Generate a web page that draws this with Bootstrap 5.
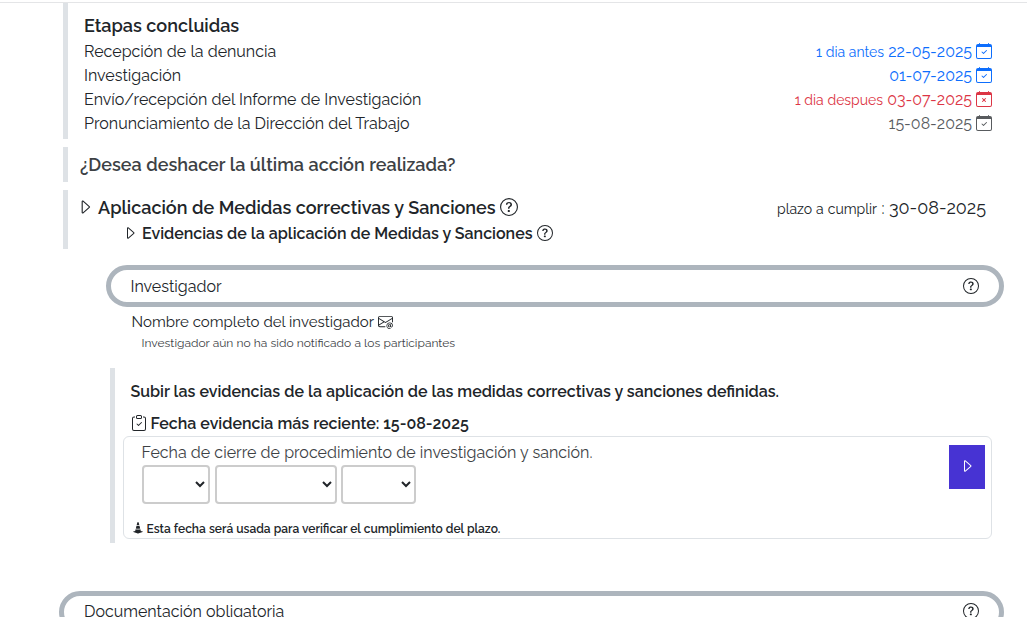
<!DOCTYPE html>
<html lang="es">
<head>
<meta charset="utf-8">
<meta name="viewport" content="width=device-width, initial-scale=1">
<title>Etapas del procedimiento</title>
<link rel="stylesheet" href="https://cdn.jsdelivr.net/npm/bootstrap@5.3.0/dist/css/bootstrap.min.css">
<style>
body{font-family:Raleway,Lato,sans-serif;font-size:16px;line-height:24px;word-spacing:.12px;overflow:hidden;height:617px}
.topline{border-top:1px solid #e4e5e7;margin-top:2px}
.bar{border-left:5px solid #dee2e6}
.stages{margin-left:63px;height:136px;padding:10px 35px 0 16px}
.stages-title{line-height:26px;margin-bottom:1px}
.undo{margin:8px 0 0 63px;height:35px;padding-left:12px}
.soft{opacity:.87}
.current{margin:8px 0 0 63px;height:59px;padding:5px 41px 0 8px}
.current-head{height:26px;margin-bottom:1px}
.sub-step{padding-left:46px}
.deadline{word-spacing:.4px}
.t18{font-size:18px}
.t15{font-size:15px}
.t14{font-size:14px}
.t12{font-size:12px}
.ic{width:1em;height:1em;fill:currentColor;flex:none;display:block}
.ic-up{margin-top:-2px}
.g4{gap:4px}
.pill{border:5px solid #adb5bd;border-radius:21px;height:42px;padding:0 20.5px 0 19.5px;margin:16px 23px 0 106px}
.pill span{padding-top:1px}
.pill-wide{margin:48px 23px 0 59px;padding-left:20px}
.pill.pill-wide span{padding-top:0}
.investigator{margin-left:131.5px;height:46px;padding-top:3px}
.note{padding-left:10px;line-height:18px}
.upload{margin:15px 35px 0 110px;height:175px;padding:12px 0 0 8px}
.upload-line{padding-left:7.5px}
.datebox{border:1px solid #dee2e6;border-radius:6px;height:103px;padding:4px 6px 0 17.5px}
.datebox select{border:2px solid #ccc;border-radius:4px;height:39px;background:#fff;color:#212529;font-family:Raleway,sans-serif;padding:5px 5px 4px 4px}
.selects{gap:5px;padding-left:.5px}
.s-day{width:68px}.s-month{width:122px}.s-year{width:75px;margin-left:-1px}
.send{background:#4733d3;color:#fff;width:36px;height:44px;border:0;border-radius:0;margin-top:4px}
.hint{margin:13px 0 0 -10px;gap:3px}
</style>
</head>
<body>
<svg class="d-none">
  <symbol id="cal" viewBox="0 0 16 16"><path d="M10.854 7.146a.5.5 0 0 1 0 .708l-3 3a.5.5 0 0 1-.708 0l-1.5-1.5a.5.5 0 1 1 .708-.708L7.5 9.793l2.646-2.647a.5.5 0 0 1 .708 0z"/><path d="M3.5 0a.5.5 0 0 1 .5.5V1h8V.5a.5.5 0 0 1 1 0V1h1a2 2 0 0 1 2 2v11a2 2 0 0 1-2 2H2a2 2 0 0 1-2-2V3a2 2 0 0 1 2-2h1V.5a.5.5 0 0 1 .5-.5zM1 4v10a1 1 0 0 0 1 1h12a1 1 0 0 0 1-1V4H1z"/></symbol>
  <symbol id="calx" viewBox="0 0 16 16"><path d="M6.146 7.146a.5.5 0 0 1 .708 0L8 8.293l1.146-1.147a.5.5 0 1 1 .708.708L8.707 9l1.147 1.146a.5.5 0 0 1-.708.708L8 9.707l-1.146 1.147a.5.5 0 0 1-.708-.708L7.293 9 6.146 7.854a.5.5 0 0 1 0-.708z"/><path d="M3.5 0a.5.5 0 0 1 .5.5V1h8V.5a.5.5 0 0 1 1 0V1h1a2 2 0 0 1 2 2v11a2 2 0 0 1-2 2H2a2 2 0 0 1-2-2V3a2 2 0 0 1 2-2h1V.5a.5.5 0 0 1 .5-.5zM1 4v10a1 1 0 0 0 1 1h12a1 1 0 0 0 1-1V4H1z"/></symbol>
  <symbol id="help" viewBox="0 0 16 16"><path d="M8 15A7 7 0 1 1 8 1a7 7 0 0 1 0 14zm0 1A8 8 0 1 0 8 0a8 8 0 0 0 0 16z"/><path d="M5.255 5.786a.237.237 0 0 0 .241.247h.825c.138 0 .248-.113.266-.25.09-.656.54-1.134 1.342-1.134.686 0 1.314.343 1.314 1.168 0 .635-.374.927-.965 1.371-.673.489-1.206 1.06-1.168 1.987l.003.217a.25.25 0 0 0 .25.246h.811a.25.25 0 0 0 .25-.25v-.105c0-.718.273-.927 1.01-1.486.609-.463 1.244-.977 1.244-2.056 0-1.511-1.276-2.241-2.673-2.241-1.267 0-2.655.59-2.75 2.286zm1.557 5.763c0 .533.425.927 1.01.927.609 0 1.028-.394 1.028-.927 0-.552-.42-.94-1.029-.94-.584 0-1.009.388-1.009.94z"/></symbol>
  <symbol id="caret" viewBox="0 0 16 16"><path d="M6 12.796V3.204L11.481 8 6 12.796zm.659.753 5.48-4.796a1 1 0 0 0 0-1.506L6.66 2.451C6.011 1.885 5 2.345 5 3.204v9.592a1 1 0 0 0 1.659.753z"/></symbol>
  <symbol id="clip" viewBox="0 0 16 16"><path d="M10.854 7.146a.5.5 0 0 1 0 .708l-3 3a.5.5 0 0 1-.708 0l-1.5-1.5a.5.5 0 1 1 .708-.708L7.5 9.793l2.646-2.647a.5.5 0 0 1 .708 0z"/><path d="M4 1.5H3a2 2 0 0 0-2 2V14a2 2 0 0 0 2 2h10a2 2 0 0 0 2-2V3.5a2 2 0 0 0-2-2h-1v1h1a1 1 0 0 1 1 1V14a1 1 0 0 1-1 1H3a1 1 0 0 1-1-1V3.5a1 1 0 0 1 1-1h1v-1z"/><path d="M9.5 1a.5.5 0 0 1 .5.5v1a.5.5 0 0 1-.5.5h-3a.5.5 0 0 1-.5-.5v-1a.5.5 0 0 1 .5-.5h3zm-3-1A1.5 1.5 0 0 0 5 1.5v1A1.5 1.5 0 0 0 6.5 4h3A1.5 1.5 0 0 0 11 2.5v-1A1.5 1.5 0 0 0 9.5 0h-3z"/></symbol>
  <symbol id="mail" viewBox="0 0 16 16"><path d="M2 2a2 2 0 0 0-2 2v8.01A2 2 0 0 0 2 14h5.5a.5.5 0 0 0 0-1H2a1 1 0 0 1-.966-.741l5.64-3.471L8 9.583l7-4.2V8.5a.5.5 0 0 0 1 0V4a2 2 0 0 0-2-2H2Zm3.708 6.208L1 11.105V5.383l4.708 2.825ZM1 4.217V4a1 1 0 0 1 1-1h12a1 1 0 0 1 1 1v.217l-7 4.2-7-4.2Z"/><path d="M14.247 14.269c1.01 0 1.587-.857 1.587-2.025v-.21C15.834 10.43 14.64 9 12.52 9h-.035C10.42 9 9 10.36 9 12.432v.214C9 14.82 10.438 16 12.358 16h.044c.594 0 1.018-.074 1.237-.175v-.73c-.245.11-.673.18-1.18.18h-.044c-1.334 0-2.571-.788-2.571-2.655v-.157c0-1.657 1.058-2.724 2.64-2.724h.04c1.535 0 2.484 1.05 2.484 2.326v.118c0 .975-.324 1.39-.639 1.39-.232 0-.41-.148-.41-.42v-2.19h-.906v.569h-.03c-.084-.298-.368-.63-.954-.63-.778 0-1.259.555-1.259 1.4v.528c0 .892.49 1.434 1.26 1.434.471 0 .896-.227 1.014-.643h.043c.118.42.617.648 1.12.648Zm-2.453-1.588v-.227c0-.546.227-.791.573-.791.297 0 .572.192.572.708v.367c0 .573-.253.744-.564.744-.354 0-.581-.215-.581-.8Z"/></symbol>
  <symbol id="cone" viewBox="0 0 16 16"><path d="m9.97 4.88.953 3.811C10.159 8.878 9.14 9 8 9c-1.14 0-2.158-.122-2.923-.309L6.03 4.88C6.635 4.957 7.3 5 8 5s1.365-.043 1.97-.12zm-.245-.978L8.97.88C8.718-.13 7.282-.13 7.03.88L6.275 3.9C6.8 3.965 7.382 4 8 4c.618 0 1.2-.036 1.725-.098zm4.396 8.613a.5.5 0 0 1 .037.96l-6 2a.5.5 0 0 1-.316 0l-6-2a.5.5 0 0 1 .037-.96l2.391-.598.565-2.257c.862.212 1.964.339 3.165.339s2.303-.127 3.165-.339l.565 2.257 2.391.598z"/></symbol>
</svg>
<main class="topline">
  <section class="bar stages">
    <div class="t18 fw-semibold stages-title">Etapas concluidas</div>
    <div class="d-flex justify-content-between"><span>Recepción de la denuncia</span><span class="d-flex align-items-center g4 text-primary"><span><span class="t14">1 dia antes</span> 22-05-2025</span><svg class="ic ic-up"><use href="#cal"/></svg></span></div>
    <div class="d-flex justify-content-between"><span>Investigación</span><span class="d-flex align-items-center g4 text-primary">01-07-2025<svg class="ic ic-up"><use href="#cal"/></svg></span></div>
    <div class="d-flex justify-content-between"><span>Envío/recepción del Informe de Investigación</span><span class="d-flex align-items-center g4 text-danger"><span><span class="t14">1 dia despues</span> 03-07-2025</span><svg class="ic ic-up"><use href="#calx"/></svg></span></div>
    <div class="d-flex justify-content-between"><span>Pronunciamiento de la Dirección del Trabajo</span><span class="d-flex align-items-center g4 opacity-75">15-08-2025<svg class="ic ic-up"><use href="#cal"/></svg></span></div>
  </section>
  <section class="bar undo d-flex align-items-center t18 fw-semibold"><span class="soft">¿Desea deshacer la última acción realizada?</span></section>
  <section class="bar current">
    <div class="current-head d-flex justify-content-between align-items-center">
      <div class="d-flex align-items-center g4 t18 fw-semibold"><svg class="ic ic-up"><use href="#caret"/></svg>Aplicación de Medidas correctivas y Sanciones<svg class="ic ic-up"><use href="#help"/></svg></div>
      <div class="deadline"><span class="t14">plazo a cumplir</span> : <span class="t18">30-08-2025</span></div>
    </div>
    <div class="sub-step d-flex align-items-center g4 fw-semibold"><svg class="ic ic-up"><use href="#caret"/></svg>Evidencias de la aplicación de Medidas y Sanciones<svg class="ic ic-up"><use href="#help"/></svg></div>
  </section>
  <div class="pill d-flex justify-content-between align-items-center"><span>Investigador</span><svg class="ic"><use href="#help"/></svg></div>
  <div class="investigator">
    <div class="d-flex align-items-center g4 t15"><span>Nombre completo del investigador</span><svg class="ic ic-up"><use href="#mail"/></svg></div>
    <div class="t12 note soft">Investigador aún no ha sido notificado a los participantes</div>
  </div>
  <section class="bar upload">
    <div class="fw-semibold upload-line">Subir las evidencias de la aplicación de las medidas correctivas y sanciones definidas.</div>
    <div class="fw-semibold upload-line mt-2 d-flex align-items-center g4"><svg class="ic ic-up"><use href="#clip"/></svg>Fecha evidencia más reciente: 15-08-2025</div>
    <div class="datebox d-flex justify-content-between align-items-start">
      <div>
        <div class="soft">Fecha de cierre de procedimiento de investigación y sanción.</div>
        <div class="d-flex selects">
          <select class="s-day" aria-label="Día"><option></option></select>
          <select class="s-month" aria-label="Mes"><option></option></select>
          <select class="s-year" aria-label="Año"><option></option></select>
        </div>
        <div class="hint t12 fw-semibold d-flex align-items-center"><svg class="ic ic-up"><use href="#cone"/></svg>Esta fecha será usada para verificar el cumplimiento del plazo.</div>
      </div>
      <button class="send d-flex align-items-center justify-content-center" type="button" aria-label="Enviar"><svg class="ic ic-up"><use href="#caret"/></svg></button>
    </div>
  </section>
  <div class="pill pill-wide d-flex justify-content-between align-items-center"><span>Documentación obligatoria</span><svg class="ic ic-up"><use href="#help"/></svg></div>
</main>
</body>
</html>
